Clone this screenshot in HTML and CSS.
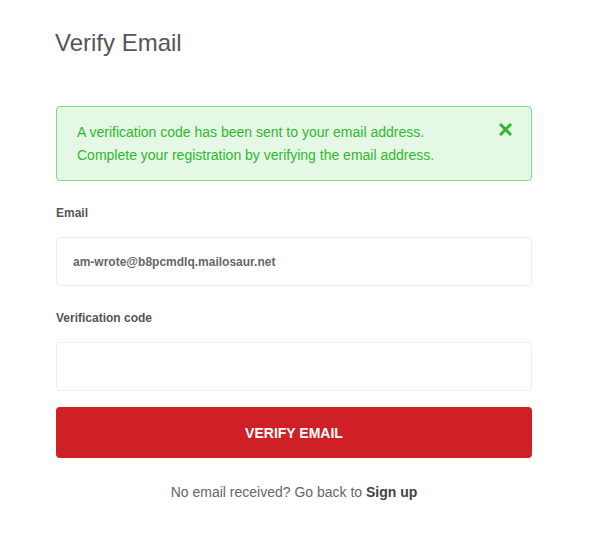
FILE: index.html
```html
<!DOCTYPE html>
<html lang="en">
<head>
  <meta charset="UTF-8" />
  <title>Verify Email</title>
  <link rel="stylesheet" href="styles.css">
</head>
<body>
  <div class="page">
    <h1 class="title">Verify Email</h1>

    <div class="alert">
      <p class="alert-text">A verification code has been sent to your email address.<br>Complete your registration by verifying the email address.</p>
      <button class="alert-close" aria-label="Close">
        <svg width="13" height="13" viewBox="0 0 13 13">
          <path d="M2 2 L11 11 M11 2 L2 11" stroke="#2eb82e" stroke-width="3" stroke-linecap="square" />
        </svg>
      </button>
    </div>

    <form class="form">
      <label class="label" for="email">Email</label>
      <input class="field" id="email" type="text" value="am-wrote@b8pcmdlq.mailosaur.net">

      <label class="label" for="code">Verification code</label>
      <input class="field" id="code" type="text">

      <button class="btn-verify" type="button">VERIFY EMAIL</button>
    </form>

    <p class="footer">No email received? Go back to <a href="#">Sign up</a></p>
  </div>
</body>
</html>
```

FILE: styles.css
```css
html, body {
  margin: 0;
  padding: 0;
  background: #fff;
  font-family: "Liberation Sans", Arial, sans-serif;
}

.page {
  width: 476px;
  padding: 26px 0 0 56px;
}

.title {
  margin: 0 0 0 -1px;
  font-size: 24px;
  font-weight: normal;
  line-height: 34px;
  color: #555;
}

.alert {
  display: flex;
  justify-content: space-between;
  align-items: flex-start;
  margin-top: 46px;
  padding: 14px 20px 13px 20px;
  background: #e5f8e5;
  border: 1px solid #7edb7e;
  border-radius: 4px;
}

.alert-text {
  margin: 0;
  font-size: 14px;
  line-height: 23px;
  color: #2eb82e;
}

.alert-close {
  background: none;
  border: none;
  padding: 0;
  margin: 2px -1px 0 0;
  cursor: pointer;
  line-height: 0;
}

.form {
  display: flex;
  flex-direction: column;
  margin-top: 24px;
}

.label {
  font-size: 12px;
  font-weight: bold;
  color: #555;
  line-height: 16px;
}

.field {
  box-sizing: border-box;
  height: 49px;
  margin: 16px 0 24px 0;
  padding: 0 16px;
  border: 1px solid #eee;
  border-radius: 4px;
  font-family: inherit;
  font-size: 12px;
  font-weight: bold;
  color: #666;
  outline: none;
}

.btn-verify {
  height: 51px;
  margin-top: -8px;
  border: none;
  border-radius: 4px;
  background: #cf1f27;
  color: #fff;
  font-family: inherit;
  font-size: 14px;
  font-weight: bold;
  cursor: pointer;
}

.footer {
  margin: 26px 0 0 0;
  text-align: center;
  font-size: 14px;
  color: #666;
}

.footer a {
  color: #444;
  font-weight: bold;
  text-decoration: none;
}
```
